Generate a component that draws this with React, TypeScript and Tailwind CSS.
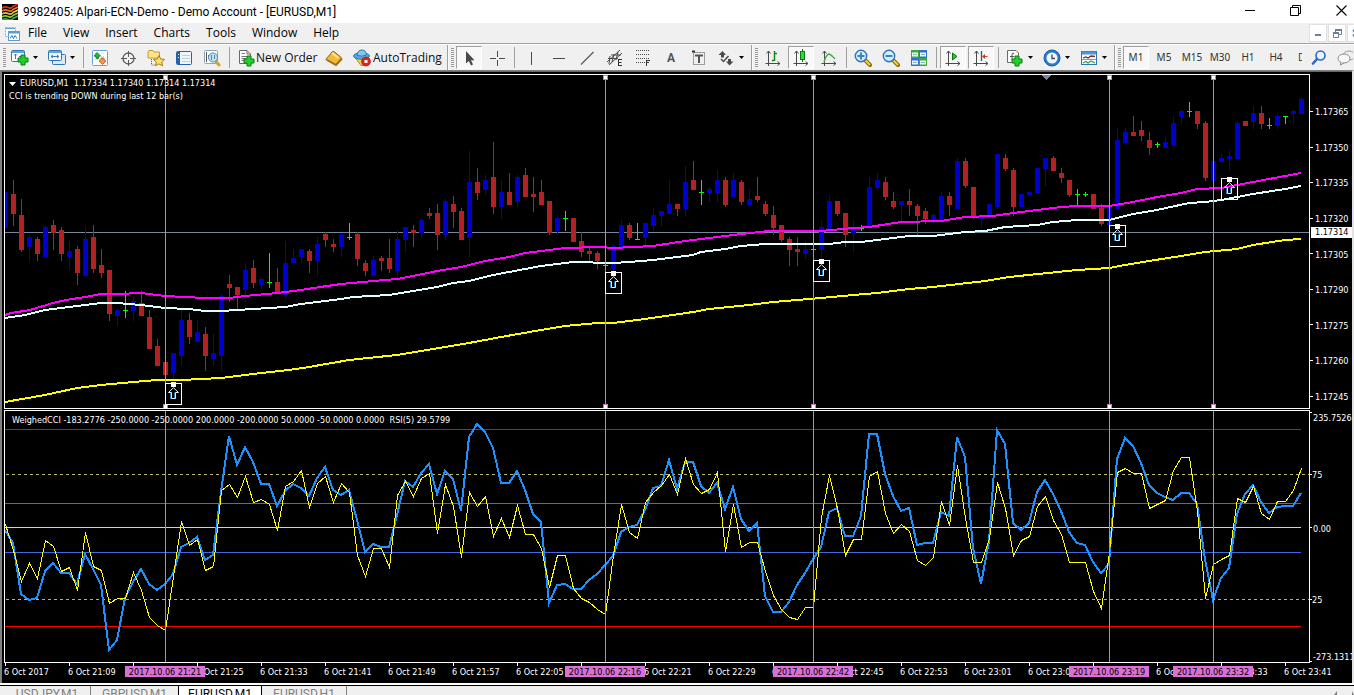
import React from "react";

type Candle = ["r" | "b" | "g", number, number, number, number];

// Each candle: colour, wick top, body top, body bottom, wick bottom
const candles: Candle[] = [
  ["b",192,192,228,228],["r",180,194,214,226],["r",199,215,250,252],["b",234,237,247,261],["r",237,239,254,261],
  ["b",225,227,257,257],["r",220,225,233,250],["r",227,230,254,261],["b",241,251,257,269],["r",246,249,273,285],
  ["b",227,239,276,276],["r",225,237,269,273],["r",249,265,273,278],["r",270,270,314,321],["b",308,310,316,326],
  ["g",291,310,311,318],["b",296,301,311,321],["r",291,303,316,316],["r",310,317,349,349],["r",339,346,366,366],
  ["r",362,362,375,375],["b",353,353,373,380],["b",310,320,356,366],["r",313,320,337,344],["b",320,332,342,342],
  ["r",327,334,356,371],["b",334,353,359,366],["b",294,296,356,371],["r",275,284,288,302],["r",287,287,295,310],
  ["b",263,270,290,302],["r",260,268,283,288],["b",277,279,285,290],["g",253,282,283,288],["r",268,282,292,292],
  ["b",241,263,295,299],["b",249,258,263,263],["b",249,249,257,263],["r",249,251,261,273],["b",237,244,261,276],
  ["r",232,234,240,247],["r",239,244,247,252],["b",234,234,247,257],["g",223,237,238,240],["r",232,234,259,266],
  ["r",260,263,271,276],["b",256,260,276,276],["r",256,258,261,271],["r",239,258,269,273],["b",230,239,271,277],
  ["b",227,227,240,252],["r",225,230,233,247],["b",218,220,233,238],["r",208,213,216,219],["r",204,213,235,250],
  ["b",199,201,235,240],["r",196,204,212,228],["r",208,211,240,240],["b",151,182,238,257],["r",168,182,193,200],
  ["b",175,180,190,195],["r",142,177,207,214],["b",180,192,207,219],["r",173,192,205,205],["b",175,177,202,207],
  ["r",168,175,197,197],["r",177,194,197,212],["r",180,192,205,205],["r",201,201,233,235],["b",215,218,231,233],
  ["g",211,218,219,231],["r",218,218,242,242],["r",232,241,252,257],["r",246,251,254,262],["r",251,253,261,269],
  ["g",265,265,266,266],["b",244,246,269,271],["b",220,225,250,252],["r",223,225,238,240],["g",223,239,240,240],
  ["b",223,223,238,245],["b",208,215,226,231],["b",211,211,216,226],["b",180,204,214,214],["r",204,204,209,216],
  ["b",166,182,209,216],["r",161,180,190,190],["g",180,192,193,205],["b",187,189,193,202],["b",170,180,193,202],
  ["r",177,180,205,207],["b",173,180,197,197],["r",180,182,202,205],["b",189,199,205,205],["r",177,196,200,202],
  ["r",201,204,214,216],["r",206,215,228,235],["r",225,225,240,242],["r",237,239,250,266],["r",237,249,252,266],
  ["b",241,249,254,259],["g",249,249,250,250],["b",220,227,250,260],["b",196,201,230,232],["r",201,201,214,216],
  ["r",213,213,235,247],["b",220,228,233,252],["g",225,228,229,231],["b",177,187,227,231],["b",173,180,188,190],
  ["r",177,182,197,200],["r",192,201,207,209],["b",201,201,205,221],["r",189,201,205,216],["r",204,206,216,235],
  ["r",208,211,219,224],["b",213,215,219,224],["b",192,196,219,220],["r",192,196,205,216],["b",158,161,209,209],
  ["r",158,161,186,188],["r",187,187,216,219],["b",216,217,219,228],["b",204,204,216,219],["b",154,154,207,209],
  ["r",154,158,169,171],["r",168,170,207,216],["b",194,194,207,207],["b",192,192,195,195],["b",168,168,193,193],
  ["b",158,158,169,186],["r",156,158,171,171],["r",168,173,178,183],["r",180,180,195,197],["g",189,194,195,206],
  ["g",192,194,195,197],["r",194,194,209,209],["r",204,208,224,226],["b",205,206,225,226],["b",128,140,209,209],
  ["b",128,132,143,145],["r",116,132,136,136],["r",121,130,136,141],["r",132,140,148,155],["g",142,144,145,148],
  ["b",137,142,148,148],["b",116,123,145,148],["b",109,111,117,124],["g",102,111,112,117],["r",111,111,124,129],
  ["r",121,123,178,181],["b",161,161,181,181],["b",154,158,162,162],["b",151,156,159,171],["b",121,123,159,159],
  ["r",121,121,126,126],["b",106,113,122,129],["r",106,113,124,129],["g",118,125,126,129],["b",113,116,126,129],
  ["g",116,116,117,124],["b",109,111,114,124],["b",97,99,114,114],
];

const cci = [
  530,543,594,600,598,571,563,573,573,584,554,569,585,650,640,598,582,569,584,590,584,574,547,543,537,560,555,492,
  436,465,447,462,484,484,506,491,484,488,496,478,467,490,495,490,520,552,544,547,547,515,481,487,473,464,494,471,
  479,511,437,424,432,448,483,483,471,490,514,522,603,585,584,589,589,580,574,565,556,532,527,525,510,488,486,460,
  489,462,462,486,493,483,509,487,519,531,523,596,612,612,602,585,573,559,547,512,508,536,536,516,434,434,474,496,
  511,508,545,543,543,512,516,437,457,548,584,541,430,444,523,530,523,492,480,494,511,532,543,545,562,573,564,459,
  438,446,463,485,493,497,500,493,493,504,559,600,578,568,514,494,485,502,513,507,506,506,493,
];

const rsi = [
  524,550,581,563,578,540,546,571,567,590,532,566,570,603,598,598,572,590,617,625,630,576,521,545,539,570,566,490,
  484,497,476,502,499,504,530,486,481,470,507,483,476,502,483,492,555,576,548,548,567,495,481,496,478,473,533,484,
  506,557,492,506,496,536,518,537,505,534,534,548,587,555,555,588,598,602,609,614,555,504,532,538,502,492,485,474,
  494,458,484,493,489,472,551,504,547,542,542,571,595,609,617,619,607,607,517,475,508,555,539,539,476,471,513,533,
  524,531,560,565,557,501,525,465,518,562,562,538,482,508,555,540,536,506,496,520,534,562,562,562,591,608,552,472,
  468,473,473,508,504,500,470,457,457,511,598,564,559,555,498,502,486,513,519,501,501,490,468,
];

const fastMa =
  "5,315 11,313 30,310 53,303 66,300 85,297 101,294 117,294 141,293 165,296 205,298 229,298 245,296 277,293 301,290 320,287 341,284 373,281 397,279 413,276 437,271 461,267 485,261 509,257 525,253 565,248 600,247 613,248 653,246 685,241 733,235 769,231 821,231 853,228 869,227 901,222 941,221 965,217 993,216 1013,213 1037,210 1061,207 1077,206 1109,206 1133,202 1157,197 1181,193 1197,189 1221,188 1237,185 1253,182 1285,176 1301,173";
const midMa =
  "5,318 25,315 45,310 77,306 101,303 117,303 141,305 165,308 189,309 205,311 221,311 253,309 285,307 301,304 325,301 341,299 353,297 389,295 413,291 437,287 453,283 469,281 493,275 509,272 541,266 573,262 613,263 629,262 653,260 677,257 693,255 701,252 725,249 741,246 765,244 829,244 845,242 861,242 893,238 909,236 933,236 965,232 985,231 1005,227 1037,225 1053,222 1077,220 1109,220 1133,214 1157,210 1189,203 1205,202 1221,200 1253,194 1285,189 1301,186";
const slowMa =
  "5,402 45,395 77,388 101,385 133,382 157,380 181,380 221,378 261,373 289,370 309,367 349,360 397,355 421,351 469,343 501,337 541,330 565,326 597,323 613,323 645,319 693,312 709,309 749,305 773,302 821,298 853,295 877,293 909,289 933,287 985,281 1009,277 1077,270 1109,268 1125,265 1149,261 1181,256 1205,252 1237,249 1253,245 1285,240 1301,239";

const fills = { r: "#b22222", b: "#0000cd", g: "#00ff00" };
const markers = [165, 605, 813, 1109, 1213];
const arrowBoxes = [[165, 383], [605, 272], [813, 260], [1109, 225], [1221, 178]];
const priceLabels = ["1.17365","1.17350","1.17335","1.17320","1.17305","1.17290","1.17275","1.17260","1.17245"];
const priceTicks = [111, 147, 182, 218, 253, 289, 324, 360, 396];
const dateLabels = [
  "6 Oct 2017","6 Oct 21:09","6 Oct 21:17","6 Oct 21:25","6 Oct 21:33","6 Oct 21:41","6 Oct 21:49","6 Oct 21:57",
  "6 Oct 22:05","6 Oct 22:13","6 Oct 22:21","6 Oct 22:29","6 Oct 22:37","6 Oct 22:45","6 Oct 22:53","6 Oct 23:01",
  "6 Oct 23:09","6 Oct 23:17","6 Oct 23:25","6 Oct 23:33","6 Oct 23:41",
];
const dateTags = [
  { x: 165, text: "2017.10.06 21:21" },
  { x: 605, text: "2017.10.06 22:16" },
  { x: 813, text: "2017.10.06 22:42" },
  { x: 1109, text: "2017.10.06 23:19" },
  { x: 1213, text: "2017.10.06 23:32" },
];

const series = (ys: number[]) => ys.map((y, i) => `${5 + i * 8},${y}`).join(" ");
// Offset of a chart row inside the price pane, as a share of its height
const paneTop = (y: number) => `${((y - 74) / 335) * 100}%`;

function PriceChart() {
  return (
    <svg className="absolute inset-0 h-full w-full" viewBox="4 74 1348 335" preserveAspectRatio="none" shapeRendering="crispEdges" aria-label="EURUSD price chart">
      <clipPath id="price-clip"><rect x="5" y="75" width="1304" height="333" /></clipPath>
      <g clipPath="url(#price-clip)">
        <rect x="5" y="232" width="1304" height="1" fill="#778899" />
        {candles.map(([c, wt, bt, bb, wb], i) => (
          <g key={i} fill={fills[c]}>
            <rect x={5 + i * 8} y={wt} width="1" height={wb - wt} />
            <rect x={3 + i * 8} y={bt} width="5" height={bb - bt} />
          </g>
        ))}
        <g fill="none" strokeWidth="2">
          <polyline points={slowMa} stroke="#ffff00" />
          <polyline points={midMa} stroke="#e0ffff" />
          <polyline points={fastMa} stroke="#ff00ff" />
        </g>
        {markers.map((x) => (
          <g key={x}>
            <rect x={x} y="75" width="1" height="333" fill="#da70d6" />
            <rect x={x - 2} y="75" width="5" height="5" fill="#da70d6" />
            <rect x={x - 1} y="76" width="3" height="3" fill="#fff" />
            <rect x={x - 2} y="404" width="5" height="4" fill="#da70d6" />
            <rect x={x - 1} y="405" width="3" height="3" fill="#fff" />
          </g>
        ))}
        {arrowBoxes.map(([x, y]) => (
          <g key={x} transform={`translate(${x} ${y})`}>
            <rect x="0.5" y="0.5" width="16" height="21" fill="none" stroke="#fff" />
            <rect x="6" y="-1" width="5" height="5" fill="#fff" />
            <g shapeRendering="auto" fill="none">
              <path d="M5.5 9.500 V16 M9.500 9.500 V15" stroke="#1673c4" />
              <path d="M8.500 4.700 L13.500 9.500 H10.500 V15.500 H6.500 V9.500 H3.500 Z" stroke="#e6f2ff" />
            </g>
          </g>
        ))}
        <path d="M1042 75 H1051 L1046.500 80 Z" fill="#778899" />
      </g>
      <rect x="4.500" y="74.500" width="1305" height="334" fill="none" stroke="#fff" />
      {priceTicks.map((y) => <rect key={y} x="1310" y={y} width="3" height="1" fill="#fff" />)}
    </svg>
  );
}

function IndicatorChart() {
  const levels: [number, string][] = [[429, "#ff0000"], [503, "#4169e1"], [527, "#98fb98"], [552, "#4169e1"], [626, "#ff0000"]];
  return (
    <svg className="absolute inset-0 h-full w-full" viewBox="4 410 1348 256" preserveAspectRatio="none" shapeRendering="crispEdges" aria-label="CCI and RSI indicators">
      {levels.map(([y, c]) => <rect key={y} x="5" y={y} width="1296" height="1" fill={c} />)}
      <path d="M6 474.500 H1309 M6 599.500 H1309" stroke="#bdb76b" strokeDasharray="3 3" />
      <polyline points={series(cci)} fill="none" stroke="#1e90ff" strokeWidth="2" />
      <polyline points={series(rsi)} fill="none" stroke="#ffff00" strokeWidth="1" transform="translate(0.5 0.5)" />
      {markers.map((x) => <rect key={x} x={x} y="411" width="1" height="251" fill="#da70d6" />)}
      <rect x="4.500" y="410.500" width="1305" height="252" fill="none" stroke="#fff" />
      {[412, 474, 527, 599, 661].map((y) => <rect key={y} x="1310" y={y} width="2" height="1" fill="#fff" />)}
      {dateLabels.map((_, i) => <rect key={i} x={5 + i * 64} y="663" width="1" height="3" fill="#fff" />)}
    </svg>
  );
}

function Icon({ children, w = 18 }: { children: React.ReactNode; w?: number }) {
  return (
    <svg width={w} height="18" viewBox={`0 0 ${w} 18`} fill="none" className="shrink-0" aria-hidden="true">
      {children}
    </svg>
  );
}

const Caret = () => (
  <svg width="5" height="3" viewBox="0 0 5 3" className="shrink-0" aria-hidden="true"><path d="M0 0 H5 L2.500 3 Z" fill="#000" /></svg>
);

const Plus = ({ x, y }: { x: number; y: number }) => (
  <path transform={`translate(${x} ${y})`} d="M3.500 .5 h4 v3 h3 v4 h-3 v3 h-4 v-3 h-3 v-4 h3 Z" fill="#1fd02b" stroke="#087c12" />
);

const Axes = () => (
  <path d="M4.500 2 V14.500 H16 M1.500 14.500 H4 M4.500 14 V17 M2.500 4.500 L4.500 2 L6.500 4.500 M13.500 12.500 L16 14.500 L13.500 16.500" stroke="#4a4a4a" />
);

function Tool({ label, pressed, children }: { label: string; pressed?: boolean; children: React.ReactNode }) {
  return (
    <button
      type="button"
      aria-label={label}
      className={
        pressed
          ? "mx-px flex h-[23px] w-[26px] shrink-0 items-center justify-center border border-t-[#a0a0a0] border-l-[#a0a0a0] border-r-white border-b-white bg-[#f8f8f8]"
          : "flex h-[23px] w-7 shrink-0 items-center justify-center"
      }
    >
      {children}
    </button>
  );
}

function DropTool({ label, wide, children }: { label: string; wide?: boolean; children: React.ReactNode }) {
  return (
    <button type="button" aria-label={label} className={wide ? "flex h-[23px] w-[37px] shrink-0 items-center gap-1 pl-[5px]" : "flex h-[23px] w-9 shrink-0 items-center gap-1 pl-1"}>
      {children}
      <Caret />
    </button>
  );
}

const Sep = () => <div className="flex w-[6px] shrink-0 justify-center"><div className="h-[21px] w-px bg-[#a0a0a0]" /></div>;
const Edge = () => <div className="flex w-1 shrink-0 justify-end self-stretch border-r border-white"><div className="w-px bg-[#a0a0a0]" /></div>;
const Grip = () => (
  <div className="flex w-[6px] shrink-0 justify-center">
    <svg width="3" height="20" aria-hidden="true"><path d="M1.500 0 V20" stroke="#9a9a9a" strokeWidth="3" strokeDasharray="1 1" /></svg>
  </div>
);

function Magnifier({ sign }: { sign: "+" | "-" }) {
  return (
    <Icon>
      <path d="M11.500 11.500 L16 16" stroke="#8a6a08" strokeWidth="4" strokeLinecap="round" />
      <path d="M11.500 11.500 L16 16" stroke="#f6d231" strokeWidth="2" />
      <circle cx="7" cy="7" r="5.700" fill="#cfeeff" stroke="#2f72bd" strokeWidth="1.400" />
      <path d={sign === "+" ? "M3.500 7 H10.500 M7 3.500 V10.500" : "M3.500 7 H10.500"} stroke="#3e84b5" strokeWidth="2" />
    </Icon>
  );
}

function Toolbar() {
  return (
    <div className="flex h-[26px] shrink-0 items-center overflow-hidden border-t border-white pl-px text-[12px] text-[#111]">
      <Grip />
      <DropTool label="New chart">
        <Icon>
          <rect x=".5" y="1.500" width="13" height="11" rx="1" fill="#fff" stroke="#2e75b6" /><path d="M1 3 H13" stroke="#5fa3e0" strokeWidth="2" />
          <path d="M4.500 5 V10 M3 6.500 L4.500 5 L6 6.500 M8 7.500 H10" stroke="#4778a8" />
          <Plus x={6.5} y={5.5} />
        </Icon>
      </DropTool>
      <DropTool label="Profiles" wide>
        <Icon>
          <rect x="4.500" y="5.500" width="13" height="10" rx="1" fill="#d8ebfb" stroke="#2e75b6" />
          <rect x=".5" y="1.500" width="13" height="10" rx="1" fill="#f2f9ff" stroke="#2e75b6" /><path d="M1 3 H13" stroke="#5fa3e0" strokeWidth="2" />
          <path d="M3 7.500 H11 M5 6 L3 7.500 L5 9 M9 6 L11 7.500 L9 9" stroke="#4778a8" />
        </Icon>
      </DropTool>
      <Sep />
      <Tool label="Market Watch">
        <Icon>
          <rect x="1.500" y="1.500" width="15" height="15" rx="1" fill="#fff" stroke="#5fa3e0" /><path d="M4 4.500 H14 M4 7.500 H14 M4 10.500 H14" stroke="#cfdce8" strokeDasharray="1 1" />
          <path d="M3 7 L6 3.500 L9.500 7 L7.500 7.500 V9.500 H5 V7.500 Z" fill="#22b53a" stroke="#0a7a1c" strokeWidth=".8" />
          <path d="M8 12 L11.500 15.500 L15 12 L13 11 V9 H10 V11 Z" fill="#f59a4c" stroke="#c2461b" strokeWidth=".8" />
        </Icon>
      </Tool>
      <Tool label="Data Window">
        <Icon><circle cx="9.500" cy="9.500" r="5.500" stroke="#5a5a5a" strokeWidth="1.300" /><path d="M9.500 2 V8 M9.500 11 V17 M2 9.500 H8 M11 9.500 H17" stroke="#5a5a5a" /></Icon>
      </Tool>
      <Tool label="Navigator">
        <Icon>
          <path d="M1 3 L2 1.500 H6 L7 3 H12.500 V9 H1 Z" fill="#ffe48a" stroke="#c49a25" /><path d="M4.500 10 V16 H8" stroke="#555" strokeDasharray="1 1" />
          <path d="M12 6.500 L13.700 10 L17.500 10.400 L14.700 13 L15.500 16.800 L12 14.900 L8.500 16.800 L9.300 13 L6.500 10.400 L10.300 10 Z" fill="#ffe066" stroke="#a87a12" />
        </Icon>
      </Tool>
      <Tool label="Terminal">
        <Icon>
          <rect x="1.500" y="2.500" width="15" height="13" rx="1" fill="#eef7ff" stroke="#2460ab" /><path d="M3.500 3 V15" stroke="#2460ab" strokeWidth="3" />
          <path d="M7 6.500 H15 M7 9.500 H15 M7 12.500 H15" stroke="#b8cee3" /><path d="M3 5.500 H4 M3 8.500 H4" stroke="#fff" />
        </Icon>
      </Tool>
      <Tool label="Strategy Tester">
        <Icon>
          <rect x="1.500" y="1.500" width="13" height="13" rx="1" fill="#fff" stroke="#8ca3b8" /><path d="M3.500 3 V13 M5.500 6 V9" stroke="#555" />
          <path d="M13 12.500 L16 16" stroke="#d9a520" strokeWidth="3" strokeLinecap="round" /><circle cx="10" cy="8.500" r="4.500" fill="#bfe2f8" stroke="#568cb8" /><path d="M8.500 6 V11 M11.500 6 V10" stroke="#5682a5" />
        </Icon>
      </Tool>
      <Sep />
      <button type="button" className="flex h-[23px] w-[88px] shrink-0 items-center pl-[6px] whitespace-nowrap">
        <Icon>
          <path d="M1.500 1.500 H9 L12.500 5 V14.500 H1.500 Z" fill="#fff" stroke="#6b6b6b" /><path d="M9 1.500 V5 H12" stroke="#6b6b6b" />
          <path d="M3.500 4.500 H7 M3.500 7.500 H9 M3.500 9.500 H8 M3.500 11.500 H7" stroke="#777" />
          <Plus x={5.5} y={6.5} />
        </Icon>
        New Order
      </button>
      <Tool label="MetaEditor">
        <Icon>
          <path d="M.8 10.500 L7 3 Q8 2 9.500 3 L16.800 9 L11 16 Z" fill="#f1b935" stroke="#8c6210" /><path d="M2 11 L11 16 L17 9.500" stroke="#a06f14" strokeWidth="2" /><path d="M7 4 L13.500 9" stroke="#ffe79a" strokeWidth="2" />
        </Icon>
      </Tool>
      <button type="button" className="flex h-[23px] w-[97px] shrink-0 items-center gap-[2px] pl-[5px] whitespace-nowrap">
        <Icon>
          <path d="M2.500 9 L8 16.500 H11 L15.500 8 Z" fill="#f3cf4a" stroke="#b48a1b" />
          <ellipse cx="8.500" cy="7" rx="8" ry="3.200" fill="#59a9dc" stroke="#2d78ad" /><path d="M4 6.500 Q4.500 1 9 1 Q13 1 13.500 6 Q9 8 4 6.500" fill="#83c7ee" stroke="#2d78ad" />
          <circle cx="13" cy="12.500" r="4.500" fill="#d9261c" stroke="#a30f09" strokeWidth=".6" /><rect x="11.500" y="11" width="3" height="3" fill="#fff" />
        </Icon>
        AutoTrading
      </button>
      <Edge />
      <Grip />
      <Tool label="Cursor" pressed>
        <Icon><path d="M6 2 V14.500 L8.800 12 L11 16.500 L13 15.500 L10.900 11.200 H14.500 Z" fill="#4a4a4a" /></Icon>
      </Tool>
      <Tool label="Crosshair">
        <Icon><path d="M9.500 2 V8 M9.500 11 V17 M2 9.500 H8 M11 9.500 H17" stroke="#4a4a4a" /></Icon>
      </Tool>
      <Sep />
      <Tool label="Vertical line"><Icon><path d="M9.500 3 V16" stroke="#4a4a4a" /></Icon></Tool>
      <Tool label="Horizontal line"><Icon><path d="M3 9.500 H15" stroke="#4a4a4a" /></Icon></Tool>
      <Tool label="Trendline"><Icon><path d="M3 15.500 L15.500 3" stroke="#5a5a5a" strokeWidth="1.300" /></Icon></Tool>
      <Tool label="Equidistant channel">
        <Icon><path d="M1 13 L14 1 M3 16 L16 4 M4 7 L3 15 M8 5 L6 13 M12 3 L10 11 M2 9.500 H12 M5 6 H15" stroke="#4a4a4a" /><path d="M12.500 10.500 V17 M12 10.500 H16 M12 13.500 H15.500 M12 16.500 H16" stroke="#333" /></Icon>
      </Tool>
      <Tool label="Fibonacci retracement">
        <Icon><path d="M2 1.500 H16 M2 5.500 H16 M2 9.500 H16 M2 13.500 H11" stroke="#4a4a4a" strokeDasharray="1 1" /><path d="M12.500 11 V17 M12 11.500 H16 M12 13.500 H15" stroke="#333" /></Icon>
      </Tool>
      <Tool label="Text"><span className="font-['Roboto',sans-serif] text-[12px] font-bold text-[#555]">A</span></Tool>
      <Tool label="Text label">
        <Icon><rect x="3.500" y="3.500" width="11" height="12" stroke="#4a4a4a" strokeDasharray="1 1" /><path d="M5 6.500 H13 M9 6 V14" stroke="#555" strokeWidth="2" /><path d="M2 2.500 H5" stroke="#333" strokeWidth="2" /></Icon>
      </Tool>
      <DropTool label="Arrows">
        <Icon><path d="M5.500 2 L9 6 H7 V8.500 H4 V6 H1.500 Z M12.500 16.500 L9 12.500 H11 V10 H14 V12.500 H16.500 Z" fill="#4a4a4a" /><path d="M4 10 L6.500 12.500 L11.500 7" stroke="#4a4a4a" strokeWidth="1.500" /></Icon>
      </DropTool>
      <Edge />
      <Grip />
      <Tool label="Bar chart"><Icon><Axes /><path d="M10.500 2 V12 M8 11.500 H10 M11 4.500 H13" stroke="#15851e" strokeWidth="1.500" /></Icon></Tool>
      <Tool label="Candlesticks" pressed><Icon><Axes /><path d="M10.500 0 V13" stroke="#0a7814" /><rect x="8.500" y="2.500" width="4" height="8" fill="#25df39" stroke="#0a7814" /></Icon></Tool>
      <Tool label="Line chart"><Icon><Axes /><path d="M4 13 Q6 6 9 5 Q11 5.500 15 10" stroke="#46a94d" strokeWidth="1.400" /></Icon></Tool>
      <Sep />
      <Tool label="Zoom in"><Magnifier sign="+" /></Tool>
      <Tool label="Zoom out"><Magnifier sign="-" /></Tool>
      <Tool label="Tile windows">
        <Icon>
          <rect x="1" y="1" width="8" height="8" fill="#3ba83b" /><rect x="9" y="1" width="8" height="8" fill="#2e6fd0" /><rect x="1" y="9" width="8" height="8" fill="#2e6fd0" /><rect x="9" y="9" width="8" height="8" fill="#3ba83b" />
          <path d="M2 5.500 H8 M10 5.500 H16 M2 13.500 H8 M10 13.500 H16" stroke="#eef7ff" strokeWidth="4" /><path d="M3 5.500 H7 M11 5.500 H15 M3 13.500 H7 M11 13.500 H15" stroke="#8fb4a4" />
        </Icon>
      </Tool>
      <Sep />
      <Tool label="Auto scroll" pressed><Icon><Axes /><path d="M8.500 4 L13 7.500 L8.500 11 Z" fill="#2cc63b" stroke="#0a7814" /></Icon></Tool>
      <Tool label="Chart shift" pressed><Icon><Axes /><path d="M9.500 2 V12" stroke="#1a62a8" strokeWidth="1.400" /><path d="M10 7.500 L13 5 V10 Z" fill="#c6401a" /><path d="M12 7.500 H15.500" stroke="#c6401a" /></Icon></Tool>
      <Sep />
      <DropTool label="Indicators" wide>
        <Icon>
          <path d="M1.500 1.500 H10 L12.500 4 V13.500 H1.500 Z" fill="#fff" stroke="#6b6b6b" /><path d="M8 4.500 Q6 3 6 6 V11 M4 7.500 H8" stroke="#555" />
          <Plus x={5.5} y={6.5} />
        </Icon>
      </DropTool>
      <DropTool label="Periods" wide>
        <Icon>
          <circle cx="9" cy="9" r="8" fill="#2a7fcc" stroke="#155a9c" /><circle cx="9" cy="9" r="5.500" fill="#eef7ff" /><path d="M9 5.500 V9.500 H12" stroke="#444" strokeWidth="1.300" />
        </Icon>
      </DropTool>
      <DropTool label="Templates" wide>
        <Icon>
          <rect x="1.500" y="2.500" width="15" height="13" fill="#f4faff" stroke="#2e75b6" /><path d="M2 4 H16" stroke="#4b97da" strokeWidth="3" />
          <path d="M3 9 L6 8 L8 9 L11 7 L15 7.500" stroke="#8a2a1b" strokeWidth="1.300" /><path d="M2 10.500 H16" stroke="#6ca4d4" /><path d="M3 14 L6 12.500 L8 14 L11 12 L15 14" stroke="#37a03d" strokeWidth="1.200" />
        </Icon>
      </DropTool>
      <Edge />
      <Grip />
      <div className="flex min-w-0 shrink items-center font-['Noto_Sans',sans-serif] text-[10px] text-[#333]">
        <Tool label="M1" pressed>M1</Tool>
        <Tool label="M5">M5</Tool>
        <Tool label="M15">M15</Tool>
        <Tool label="M30">M30</Tool>
        <Tool label="H1">H1</Tool>
        <Tool label="H4">H4</Tool>
        <button type="button" aria-label="D1" className="flex h-[23px] w-3 shrink-0 items-center overflow-hidden pl-[8px]">D1</button>
      </div>
      <div className="ml-auto flex w-[50px] shrink-0 items-center gap-2 overflow-hidden pl-[7px]">
        <button type="button" aria-label="Search">
          <Icon w={16}><circle cx="9.500" cy="6.500" r="4.500" fill="#eaf3ff" stroke="#2e66c8" strokeWidth="1.600" /><path d="M6 10 L2 14.500" stroke="#2e66c8" strokeWidth="2.600" strokeLinecap="round" /></Icon>
        </button>
        <button type="button" aria-label="Messages" className="shrink-0">
          <Icon w={18}><ellipse cx="14" cy="6.500" rx="6" ry="4.500" fill="#efefef" stroke="#9a9a9a" /><ellipse cx="9" cy="9.500" rx="6" ry="4.500" fill="#f8f8f8" stroke="#8a8a8a" /><path d="M6 13 L5.500 16 L9 13.800" fill="#f8f8f8" stroke="#8a8a8a" /></Icon>
        </button>
      </div>
    </div>
  );
}

function TitleBar() {
  return (
    <header className="flex h-[23px] shrink-0 items-center bg-white pl-[2px] font-['Roboto',sans-serif] text-[12px]">
      <svg width="16" height="16" viewBox="0 0 16 16" aria-hidden="true">
        <rect width="16" height="16" fill="#000" />
        <g fill="none" strokeWidth="1.600">
          <path d="M0 4 Q3 2 6 3.500 T11 2.500 L16 0" stroke="#e03020" /><path d="M0 7 Q3 5 6 6.500 T11 5.500 L16 3" stroke="#e8762a" />
          <path d="M0 10 Q3 8 6 9.500 T11 8.500 L16 6" stroke="#d9cf3a" /><path d="M0 13 Q3 11 6 12.500 T11 11.500 L16 9" stroke="#8acb3c" /><path d="M0 16 Q3 14 6 15.500 T11 14.500 L16 12" stroke="#3fae45" />
        </g>
      </svg>
      <h1 className="ml-[5px] whitespace-nowrap">9982405: Alpari-ECN-Demo - Demo Account - [EURUSD,M1]</h1>
      <div className="ml-auto flex h-full items-center gap-[35px] pr-[7px] pb-[2px]">
        <button type="button" aria-label="Minimize"><svg width="10" height="11" aria-hidden="true"><path d="M0 5.500 H10" stroke="#000" /></svg></button>
        <button type="button" aria-label="Restore"><svg width="11" height="11" aria-hidden="true"><path d="M.5 2.500 H8.500 V10.500 H.5 Z M2.500 2 V.5 H10.500 V8.500 H9" fill="none" stroke="#000" /></svg></button>
        <button type="button" aria-label="Close"><svg width="11" height="11" aria-hidden="true"><path d="M.5 .5 L10.500 10.500 M10.500 .5 L.5 10.500" stroke="#000" strokeWidth="1.100" /></svg></button>
      </div>
    </header>
  );
}

function MenuBar() {
  return (
    <nav className="flex h-[21px] shrink-0 items-center border-b border-[#a0a0a0] pl-[5px] text-[12px]">
      <svg width="15" height="15" viewBox="0 0 15 15" fill="none" className="mr-2" aria-hidden="true">
        <rect x=".5" y="1.500" width="10" height="9" fill="#fff" stroke="#7fb2e5" strokeDasharray="2 1" /><path d="M1 2.500 H10" stroke="#5b9bd5" />
        <rect x="3.500" y="5.500" width="11" height="9" fill="#fff" stroke="#5b9bd5" /><path d="M4 6.500 H14" stroke="#5b9bd5" strokeWidth="2" /><path d="M5 12.500 L7 9.500 L8.500 12.500 L10 9.500 L12 12.500" stroke="#3576b8" />
      </svg>
      <div className="flex gap-4">
        {["File", "View", "Insert", "Charts", "Tools", "Window", "Help"].map((m) => <button key={m} type="button">{m}</button>)}
      </div>
      <div className="ml-auto flex w-[45px] shrink-0 gap-px overflow-hidden">
        <button type="button" aria-label="Minimize chart" className="flex size-[18px] shrink-0 items-center justify-center border border-[#e0e0e0] bg-white"><svg width="8" height="8" aria-hidden="true"><path d="M1 6 H7" stroke="#6d7f92" strokeWidth="2" /></svg></button>
        <button type="button" aria-label="Restore chart" className="flex size-[18px] shrink-0 items-center justify-center border border-[#e0e0e0] bg-white"><svg width="9" height="9" aria-hidden="true"><path d="M.5 4 V8.500 H5.500 V4 Z M2.500 3 V1.500 H8.500 V5.500 H6" fill="none" stroke="#6d7f92" /><path d="M0 4 H6 M2 1 H9" stroke="#6d7f92" strokeWidth="2" /></svg></button>
        <button type="button" aria-label="Close chart" className="flex size-[18px] shrink-0 items-center justify-center border border-[#e0e0e0] bg-white"><svg width="8" height="8" aria-hidden="true"><path d="M1 1 L7 7 M7 1 L1 7" stroke="#6d7f92" strokeWidth="2" /></svg></button>
      </div>
    </nav>
  );
}

export default function App() {
  return (
    <div className="flex h-screen flex-col overflow-hidden bg-[#f0f0f0] font-['Open_Sans','Noto_Sans',sans-serif] text-black">
      <TitleBar />
      <MenuBar />
      <Toolbar />
      <main className="flex min-h-0 flex-1 flex-col border-t border-r-2 border-t-[#808080] border-r-[#e3e3e3]">
        <div className="flex min-h-0 flex-1 flex-col border-t border-l-2 border-t-[#696969] border-l-[#808080] bg-black pt-[2px] pl-[2px] font-['DejaVu_Sans_Condensed','Noto_Sans',sans-serif] text-[9px] leading-[13px] whitespace-pre text-white">
          <section className="relative flex min-h-0 flex-[335]">
            <PriceChart />
            <div className="relative flex-1 pt-[3px] pl-[5px]">
              <p className="flex items-center gap-1">
                <svg width="7" height="4" aria-hidden="true"><path d="M0 0 H7 L3.500 4 Z" fill="#fff" /></svg>
                EURUSD,M1  1.17334 1.17340 1.17314 1.17314
              </p>
              <p>CCI is trending DOWN during last 12 bar(s)</p>
            </div>
            <div className="relative flex w-[42px] shrink-0 flex-col justify-between pt-8 pb-[5px] pl-[5px]">
              {priceLabels.map((p) => <span key={p}>{p}</span>)}
              <span className="absolute left-px h-[11px] w-[41px] bg-white pl-1 leading-[11px] text-black" style={{ top: paneTop(227) }}>1.17314</span>
            </div>
          </section>
          <section className="relative mt-px flex min-h-0 flex-[256]">
            <IndicatorChart />
            <p className="relative flex-1 pt-1 pl-2">WeighedCCI -183.2776 -250.0000 -250.0000 200.0000 -200.0000 50.0000 -50.0000 0.0000  RSI(5) 29.5799</p>
            <div className="relative w-[42px] shrink-0 overflow-hidden">
              <span className="absolute top-[2px] left-[3px]">235.7526</span>
              <span className="absolute top-[23%] left-[2px]">75</span>
              <span className="absolute top-[44%] left-[3px]">0.00</span>
              <span className="absolute top-[72%] left-[2px]">25</span>
              <span className="absolute top-[94%] left-[3px]">-273.1311</span>
            </div>
          </section>
          <div className="relative flex h-[17px] shrink-0 overflow-hidden">
            {dateLabels.map((d) => <span key={d} className="w-16 shrink-0 leading-[12px]">{d}</span>)}
            {dateTags.map((t) => (
              <span key={t.text} className="absolute top-0 h-[11px] w-20 -translate-x-1/2 bg-[#da70d6] text-center leading-[12px] text-black" style={{ left: `${((t.x - 4) / 1348) * 100}%` }}>{t.text}</span>
            ))}
          </div>
        </div>
      </main>
      <footer className="flex h-3 shrink-0 flex-col border-t-2 border-white">
        <div className="flex h-[10px] items-start overflow-hidden border-t border-black pl-1 font-['Roboto',sans-serif] text-[12px] leading-[16px] text-[#808080]">
          <button type="button" className="w-[87px] shrink-0 border-r border-[#808080]">USDJPY,M1</button>
          <button type="button" className="w-[87px] shrink-0">GBPUSD,M1</button>
          <button type="button" className="w-[84px] shrink-0 border-x border-black bg-white text-black">EURUSD,M1</button>
          <button type="button" className="w-[85px] shrink-0 border-r border-[#808080]">EURUSD,H1</button>
          <svg width="20" height="9" className="ml-auto" aria-hidden="true"><path d="M3 5 L0 9 H3 Z M18 5 L20 9 H18 Z" fill="#808080" /></svg>
        </div>
      </footer>
    </div>
  );
}
